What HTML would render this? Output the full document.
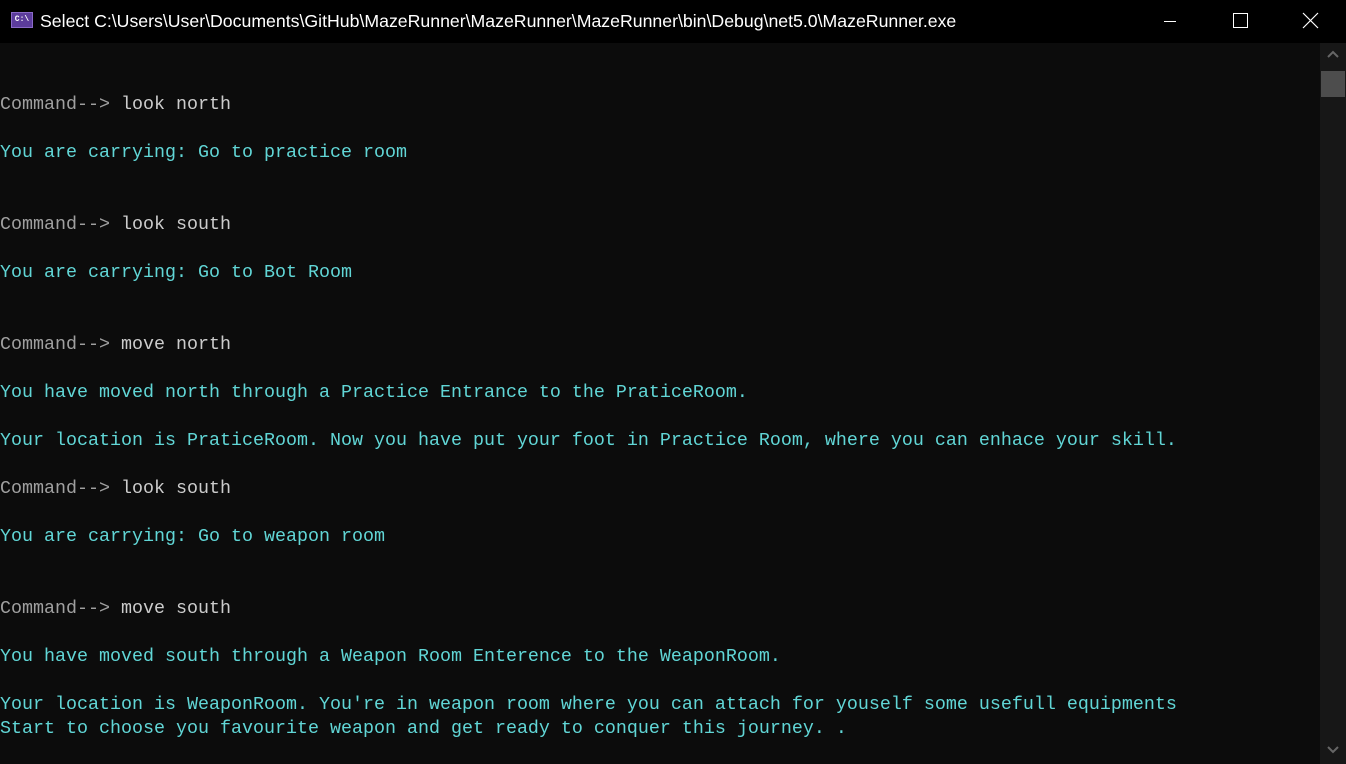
<!DOCTYPE html>
<html><head><meta charset="utf-8"><style>
html,body{margin:0;padding:0;width:1346px;height:764px;overflow:hidden;background:#0c0c0c}
#title{position:absolute;left:0;top:0;width:1346px;height:43px;background:#000;color:#fff;font-family:"Liberation Sans",sans-serif;font-size:17.7px}
#title .t{position:absolute;left:40px;top:11px;white-space:nowrap}
#icon{position:absolute;left:11px;top:12px;width:22px;height:16px;background:#5c3c9c;border:1px solid #8a6ac8;box-sizing:border-box;color:#fff;font:bold 8px "Liberation Mono",monospace;text-align:center;line-height:14px}
pre{position:absolute;left:0;top:45px;margin:0;font-family:"Liberation Mono",monospace;font-size:18.33px;line-height:24px;color:#61d6d6;white-space:pre}
.g{color:#a0a0a0}.w{color:#cccccc}
#sb{position:absolute;left:1320px;top:43px;width:26px;height:721px;background:#171717}
#thumb{position:absolute;left:1321px;top:71px;width:24px;height:26px;background:#4d4d4d}
</style></head><body>
<div id="title"><div id="icon">C:\</div><div class="t">Select C:\Users\User\Documents\GitHub\MazeRunner\MazeRunner\MazeRunner\bin\Debug\net5.0\MazeRunner.exe</div>
<svg style="position:absolute;left:1160px;top:12px" width="20" height="20"><line x1="4" y1="9.5" x2="16" y2="9.5" stroke="#fff" stroke-width="1"/></svg>
<svg style="position:absolute;left:1232px;top:12px" width="18" height="18"><rect x="1.5" y="1.5" width="14" height="14" fill="none" stroke="#fff" stroke-width="1"/></svg>
<svg style="position:absolute;left:1302px;top:12px" width="18" height="18"><path d="M1 1L16 16M16 1L1 16" stroke="#fff" stroke-width="1.2"/></svg>
</div>
<div id="sb"></div><div id="thumb"></div>
<svg style="position:absolute;left:1326px;top:50px" width="14" height="10"><path d="M2 7L7 2L12 7" fill="none" stroke="#666" stroke-width="2"/></svg>
<svg style="position:absolute;left:1326px;top:745px" width="14" height="10"><path d="M2 2L7 7L12 2" fill="none" stroke="#666" stroke-width="2"/></svg>
<pre>


<span class="g">Command--&gt; </span><span class="w">look north</span>

You are carrying: Go to practice room


<span class="g">Command--&gt; </span><span class="w">look south</span>

You are carrying: Go to Bot Room


<span class="g">Command--&gt; </span><span class="w">move north</span>

You have moved north through a Practice Entrance to the PraticeRoom.

Your location is PraticeRoom. Now you have put your foot in Practice Room, where you can enhace your skill.

<span class="g">Command--&gt; </span><span class="w">look south</span>

You are carrying: Go to weapon room


<span class="g">Command--&gt; </span><span class="w">move south</span>

You have moved south through a Weapon Room Enterence to the WeaponRoom.

Your location is WeaponRoom. You're in weapon room where you can attach for youself some usefull equipments
Start to choose you favourite weapon and get ready to conquer this journey. .
</pre>
</body></html>
